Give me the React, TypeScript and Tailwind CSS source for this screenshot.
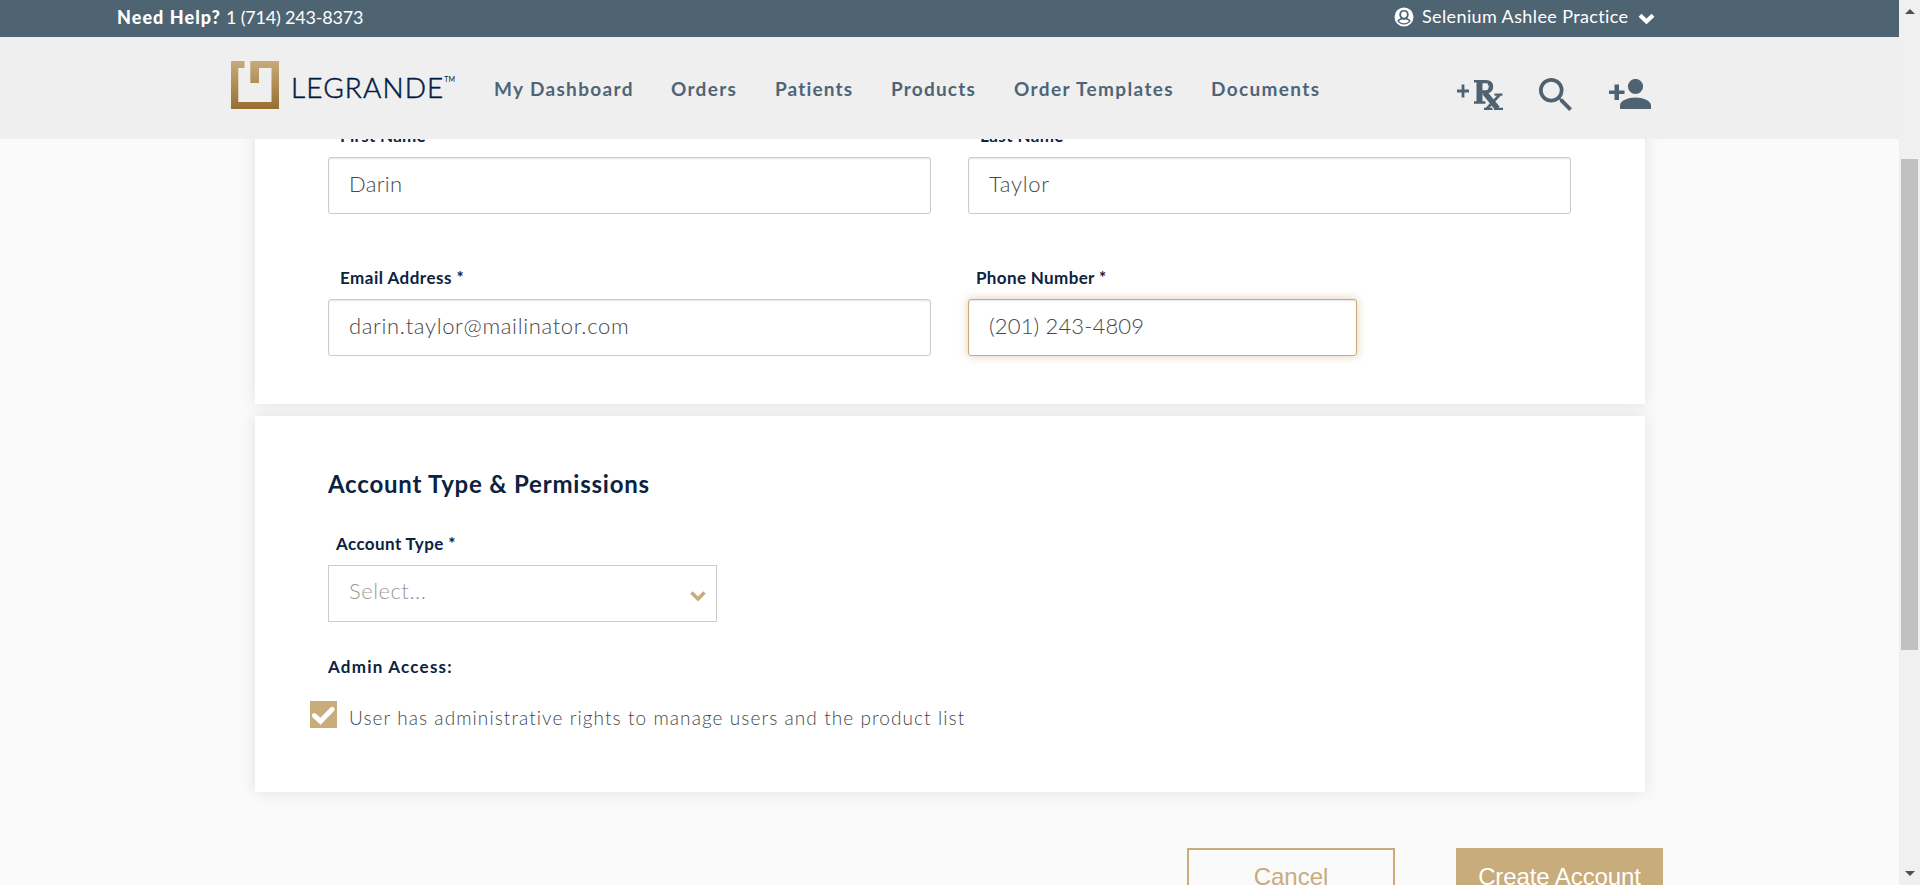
import type { ReactNode } from 'react';

const navItems = [
  { label: 'My Dashboard', cls: 'w-[177px] tracking-[1.33px]' },
  { label: 'Orders', cls: 'w-[104px] tracking-[1.3px]' },
  { label: 'Patients', cls: 'w-[116px] tracking-[1.15px]' },
  { label: 'Products', cls: 'w-[123px] tracking-[1.2px]' },
  { label: 'Order Templates', cls: 'w-[197px] tracking-[1.38px]' },
  { label: 'Documents', cls: 'w-[120px] tracking-[1.35px]' },
];

function Label({ children, className }: { children: ReactNode; className: string }) {
  return (
    <label className={`block h-5 whitespace-nowrap text-[17px] font-bold leading-5 text-[#0b2240] ${className}`}>
      {children}
    </label>
  );
}

function Field({ children, className }: { children: ReactNode; className: string }) {
  return (
    <div className={`flex h-[57px] items-center rounded-[3px] border bg-white pb-[4px] pl-[20px] text-[22px] font-light text-[#45484d] ${className}`}>
      {children}
    </div>
  );
}

const plain = 'border-[#cccccc] shadow-[inset_0_1px_2px_rgba(0,0,0,0.1)]';

function Logo() {
  return (
    <div className="flex w-[263px] items-center">
      <svg width="48" height="48" viewBox="0 0 48 48" className="mb-[6px]">
        <defs>
          <linearGradient id="gold" x1="0" y1="0" x2="0" y2="1">
            <stop offset="0" stopColor="#c7ab79" />
            <stop offset="1" stopColor="#976f30" />
          </linearGradient>
        </defs>
        <path d="M0 0H13.5V7H7.3V41H40.5V7H28V22H19.3V0H48V48H0Z" fill="url(#gold)" />
      </svg>
      <span className="mb-[3px] ml-[12px] whitespace-nowrap text-[28px] font-light leading-8 tracking-[1.1px] text-[#001c43] [-webkit-text-stroke:0.5px_#001c43]">LEGRANDE</span>
      <span className="mb-[19px] text-[7px] leading-3 text-[#001c43]">TM</span>
    </div>
  );
}

function Header() {
  return (
    <header className="relative z-10">
      <div className="flex h-[37px] justify-between bg-[#4f6472] text-[18px] text-white">
        <div className="flex items-center whitespace-pre pb-[2px] pl-[117px]">
          <span className="w-[109px] font-black tracking-[1.05px]">Need Help?</span>
          <span className="tracking-[-0.2px]">1 (714) 243-8373</span>
        </div>
        <div className="flex w-[505px] items-center pb-[4px]">
          <svg width="20" height="20" viewBox="0 0 20 20">
            <circle cx="10" cy="10" r="9.5" fill="#fff" />
            <path d="M10 2.900c3.200 0 4.700 2 4.700 4.600 0 1.600-.6 2.900-1.500 3.800 2 .6 3.100 1.600 3.500 2.800A8 8 0 0 1 10 17.500a8 8 0 0 1-6.700-3.400c.4-1.200 1.500-2.200 3.500-2.800-.9-.9-1.500-2.200-1.500-3.800C5.300 4.900 6.800 2.900 10 2.900Z" fill="#4f6472" />
            <path d="M10 4.600c2 0 2.900 1.200 2.900 2.900S11.700 10.700 10 10.700 7.100 9.200 7.100 7.500 8 4.600 10 4.600ZM5 14.300c.9-1 2-1.400 3.300-1.700 1 .5 2.400.5 3.400 0 1.300.3 2.400.7 3.300 1.700A7 7 0 0 1 10 16.200a7 7 0 0 1-5-1.900Z" fill="#fff" />
          </svg>
          <span className="ml-[8px] w-[216px] whitespace-nowrap tracking-[0.38px]">Selenium Ashlee Practice</span>
          <svg width="17" height="11" viewBox="0 0 17 11" className="mt-[3px]">
            <path d="M2 2.200 8.500 8.400 15 2.200" fill="none" stroke="#fff" strokeWidth="4.200" />
          </svg>
        </div>
      </div>
      <div className="flex h-[102px] items-center bg-[#efefef] pl-[231px]">
        <Logo />
        <nav className="mt-px flex text-[19px] font-bold leading-6 text-[#4f6577]">
          {navItems.map((n) => (
            <a key={n.label} className={`shrink-0 whitespace-nowrap ${n.cls}`}>{n.label}</a>
          ))}
        </nav>
        <div className="ml-[126px] mt-[13px] flex items-center text-[#4f6272]">
          <div className="flex h-[32px] w-[82px]">
            <svg width="12" height="14" viewBox="0 0 12 14" className="mt-[5px]">
              <path d="M6 0.500V13.500M0 7H12" stroke="currentColor" strokeWidth="2.800" />
            </svg>
            <svg width="30" height="32" viewBox="0 0 30 32" className="ml-[4px]" fill="none" stroke="currentColor">
              <path d="M1 2.300H12M1 23.500H12.500" strokeWidth="2.600" />
              <path d="M6.500 2V24" strokeWidth="6" />
              <path d="M9 2.600H13C20.500 2.600 20.500 12.800 13 12.800H9" strokeWidth="3.200" />
              <path d="M15.500 3.500C18.500 5 18.500 10.500 15.500 12" strokeWidth="4" />
              <path d="M11.500 13.500 24.500 29.500" strokeWidth="5.500" />
              <path d="M26.500 16 13.500 30" strokeWidth="2.600" />
              <path d="M21.500 15.600H29.500M11 29.800H19.500M21 29.800H30" strokeWidth="2.200" />
            </svg>
          </div>
          <svg width="33" height="33" viewBox="3 3 17.490 17.490" fill="currentColor">
            <path d="M15.500 14h-.79l-.28-.27A6.471 6.471 0 0 0 16 9.500 6.500 6.500 0 1 0 9.500 16c1.610 0 3.090-.59 4.230-1.570l.27.28v.79l5 4.990L20.490 19l-4.990-5zm-6 0C7.010 14 5 11.990 5 9.500S7.010 5 9.500 5 14 7.010 14 9.500 11.990 14 9.500 14z" />
          </svg>
          <svg width="42" height="30" viewBox="0 0 42 30" fill="currentColor" className="mb-[1px] ml-[37px]">
            <circle cx="26.500" cy="7.500" r="7.600" />
            <path d="M11 30V26.500C11 21.500 19 18.500 26.500 18.500S42 21.500 42 26.500V30ZM5.500 5.500H10V11.500H15.500V15H10V21H5.500V15H0V11.500H5.500Z" />
          </svg>
        </div>
      </div>
    </header>
  );
}

function Scrollbar() {
  return (
    <div className="flex w-[21px] flex-col items-center justify-between bg-[#f0f0f0] pb-[9px] pt-[9px]">
      <svg width="10" height="5" viewBox="0 0 10 5"><path d="M5 0 10 5H0Z" fill="#505050" /></svg>
      <div className="mb-[76px] h-[491px] w-[17px] bg-[#c1c1c1]" />
      <svg width="10" height="5" viewBox="0 0 10 5"><path d="M0 0H10L5 5Z" fill="#505050" /></svg>
    </div>
  );
}

export default function App() {
  return (
    <div className="flex h-[885px] w-[1920px] overflow-hidden bg-[#fafafa] font-['Lato',sans-serif] [font-variant-ligatures:none]">
      <div className="w-[1899px]">
        <Header />
        <main className="-mt-10 ml-[255px] w-[1390px]">
          <section className="h-[305px] bg-white px-[73px] pt-[27px] shadow-[0_0_15px_rgba(0,0,0,0.1)]">
            <div className="grid grid-cols-[603px_603px] gap-x-[37px]">
              <div>
                <Label className="pl-[12px] tracking-[0.3px]">First Name</Label>
                <Field className={`mt-[11px] tracking-[0.3px] ${plain}`}>Darin</Field>
              </div>
              <div>
                <Label className="pl-[12px] tracking-[0.4px]">Last Name</Label>
                <Field className={`mt-[11px] tracking-[0.7px] ${plain}`}>Taylor</Field>
              </div>
              <div className="mt-[54px]">
                <Label className="pl-[12px] tracking-[0.48px]">Email Address *</Label>
                <Field className={`mt-[11px] tracking-[0.66px] ${plain}`}>darin.taylor@mailinator.com</Field>
              </div>
              <div className="mt-[54px]">
                <Label className="pl-[8px] tracking-[0.36px]">Phone Number *</Label>
                <Field className="mt-[11px] w-[389px] border-[#c8ac7c] tracking-[0.15px] shadow-[inset_0_1px_2px_rgba(0,0,0,0.1),0_0_10px_rgba(200,172,124,0.6)]">(201) 243-4809</Field>
              </div>
            </div>
          </section>
          <section className="mt-[12px] h-[376px] bg-white px-[73px] pt-[53px] shadow-[0_0_15px_rgba(0,0,0,0.1)]">
            <h2 className="h-[30px] text-[24px] font-bold leading-[30px] tracking-[0.78px] text-[#0b2240]">Account Type &amp; Permissions</h2>
            <Label className="mt-[35px] pl-[8px] tracking-[0.4px]">Account Type *</Label>
            <div className="mt-[11px] flex h-[57px] w-[389px] items-center justify-between border border-[#cccccc] pl-[20px] pr-[10px]">
              <span className="pb-[7px] text-[22px] font-light tracking-[0.5px] text-[#999]">Select...</span>
              <svg width="16" height="11" viewBox="0 0 16 11" className="mt-[5px]">
                <path d="M1.500 1.500 8 8 14.500 1.500" fill="none" stroke="#c8ac7c" strokeWidth="3.500" />
              </svg>
            </div>
            <Label className="mt-[35px] tracking-[1.22px]">Admin Access:</Label>
            <div className="-ml-[18px] mt-[24px] flex h-[28px]">
              <svg width="27" height="27" viewBox="0 0 27 27" className="shrink-0">
                <path d="M0 0H27V27H0Z" fill="#c8ac7c" />
                <path d="M4.300 14.700 10.500 20.200 22.200 8.300" fill="none" stroke="#fff" strokeWidth="5" strokeLinecap="round" strokeLinejoin="miter" />
              </svg>
              <span className="ml-[12px] mt-[5px] whitespace-nowrap text-[19px] font-light leading-6 tracking-[1.08px] text-[#45484d]">
                User has administrative rights to manage users and the product list
              </span>
            </div>
          </section>
          <div className="mt-[56px] flex font-['Liberation_Sans',Arial,sans-serif] text-[24px]">
            <button className="ml-[932px] h-[58px] w-[208px] shrink-0 border-2 border-[#c8ac7c] text-[#c8ac7c]">Cancel</button>
            <button className="ml-[61px] h-[58px] w-[207px] shrink-0 bg-[#c8ac7c] tracking-[-0.1px] text-white">Create Account</button>
          </div>
        </main>
      </div>
      <Scrollbar />
    </div>
  );
}
